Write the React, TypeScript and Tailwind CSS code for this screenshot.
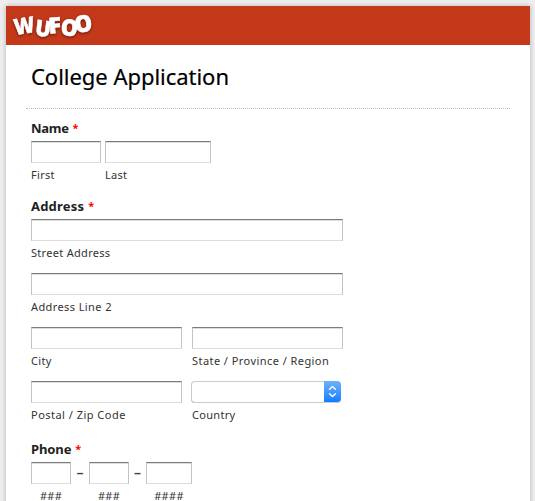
import type { ReactNode } from "react";

function Logo() {
  return (
    <svg
      width="90"
      height="39"
      viewBox="0 0 90 39"
      role="img"
      aria-label="Wufoo"
      className="overflow-visible font-['Open_Sans',sans-serif] font-extrabold drop-shadow-[0_1px_1.5px_rgba(70,10,0,0.75)]"
      fill="#fff"
      stroke="#fff"
      strokeWidth="0.6"
      fontSize="22"
      textAnchor="middle"
    >
      <text transform="translate(17.3 27.3) rotate(-9) scale(.9 1)">W</text>
      <text transform="translate(34.3 30.3) rotate(7) scale(.94 1)">U</text>
      <text transform="translate(47.5 27.2) rotate(-5) scale(1.08 1)">F</text>
      <text transform="translate(60.8 29.7) rotate(5) scale(.97 1.03)">O</text>
      <text transform="translate(76.5 25.7) rotate(-8) scale(1 1.05)">O</text>
    </svg>
  );
}

function Heading({ children, tracking }: { children: ReactNode; tracking: string }) {
  return (
    <div className="mb-1 flex h-[18px] items-center whitespace-pre text-[13px] font-bold leading-[18px] text-[#222]">
      <span className={tracking}>{children}</span>
      <span className="ml-1 text-[11px] text-[#f00]">*</span>
    </div>
  );
}

interface FieldProps {
  label: string;
  width: string;
  tracking?: string;
  center?: boolean;
}

function Field({ label, width, tracking = "tracking-[0.3px]", center }: FieldProps) {
  return (
    <label className={`block ${width}`}>
      <input
        type="text"
        className="block h-[22px] w-full border border-b-[#ddd] border-l-[#c3c3c3] border-r-[#c3c3c3] border-t-[#7c7c7c] bg-white px-1 shadow-[inset_0_1px_0_#ddd] outline-none"
      />
      <span className={`mt-1 block h-4 whitespace-nowrap text-[11px] leading-4 text-[#333] ${tracking} ${center ? "text-center" : ""}`}>
        {label}
      </span>
    </label>
  );
}

function Country() {
  return (
    <div className="w-[151px]">
      <button
        type="button"
        aria-label="Country"
        className="-ml-px flex h-[22px] w-[150px] overflow-hidden rounded-[4px] bg-white shadow-[inset_0_0_0_1px_#ccc,inset_0_-1px_0_#aaa]"
      >
        <span className="ml-auto flex h-[21px] w-[17px] items-center justify-center rounded-r-[4px] bg-linear-to-b from-[#6bb3fa] to-[#087dff]">
          <svg width="9" height="13" viewBox="0 0 9 13" fill="none" stroke="#fff" strokeWidth="1.4" strokeLinecap="round" strokeLinejoin="round">
            <path d="M1.5 4.3 4.5 1.5l3 2.8M1.5 8.7l3 2.8 3-2.8" />
          </svg>
        </span>
      </button>
      <span className="mt-1 block h-4 text-[11px] leading-4 tracking-[0.3px] text-[#333]">Country</span>
    </div>
  );
}

function Dash({ width }: { width: string }) {
  return (
    <span className={`flex h-[22px] items-center justify-center ${width}`}>
      <span className="-mt-0.5 text-[14px] font-semibold leading-none text-[#444]">–</span>
    </span>
  );
}

export default function App() {
  return (
    <div className="h-[501px] w-[535px] overflow-hidden bg-[#eee] pl-1.5 pt-1.5 font-['Noto_Sans',sans-serif]">
      <main className="h-[520px] w-[524px] bg-white shadow-[0_0_5px_rgba(0,0,0,0.25)]">
        <header className="h-[39px] bg-[#c5391b] pl-0.5">
          <Logo />
        </header>
        <div className="mx-5">
          <div className="flex h-16 items-center border-b border-dotted border-[#bbb] pb-0.5 pl-[5px]">
            <h1 className="whitespace-nowrap text-[22px] leading-8 tracking-[-0.03px] text-black [-webkit-text-stroke:0.2px_black]">College Application</h1>
          </div>
          <form className="pl-[5px] pt-2.5">
            <section>
              <Heading tracking="tracking-[-0.3px]">Name</Heading>
              <div className="flex gap-1">
                <Field label="First" width="w-[70px]" />
                <Field label="Last" width="w-[106px]" />
              </div>
            </section>
            <section className="mt-3.5">
              <Heading tracking="tracking-[0.2px]">Address</Heading>
              <div className="flex flex-col gap-3">
                <Field label="Street Address" width="w-[312px]" />
                <Field label="Address Line 2" width="w-[312px]" tracking="tracking-[0.4px]" />
                <div className="flex gap-2.5">
                  <Field label="City" width="w-[151px]" />
                  <Field label="State / Province / Region" width="w-[151px]" tracking="tracking-[0.44px]" />
                </div>
                <div className="flex gap-2.5">
                  <Field label="Postal / Zip Code" width="w-[151px]" tracking="tracking-[0.48px]" />
                  <Country />
                </div>
              </div>
            </section>
            <section className="mt-[17px]">
              <Heading tracking="tracking-[-0.1px]">Phone</Heading>
              <div className="flex">
                <Field label="###" width="w-10" center />
                <Dash width="w-[18px]" />
                <Field label="###" width="w-10" center />
                <Dash width="w-[17px]" />
                <Field label="####" width="w-[46px]" center />
              </div>
            </section>
          </form>
        </div>
      </main>
    </div>
  );
}
